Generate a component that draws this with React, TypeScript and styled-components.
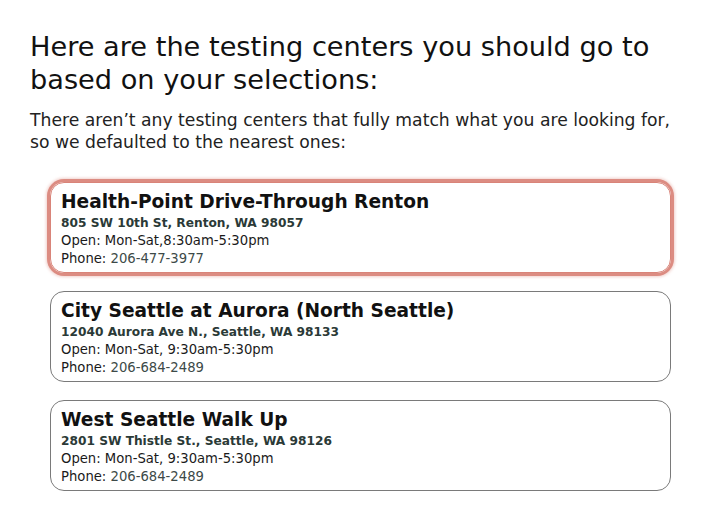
import styled, { createGlobalStyle } from 'styled-components';

const GlobalStyle = createGlobalStyle`
  body {
    margin: 0;
    background: #ffffff;
    font-family: "DejaVu Sans", "Liberation Sans", sans-serif;
    color: #111111;
  }
`;

const Page = styled.div`
  padding: 30px 30px 20px 30px;
  display: flex;
  flex-direction: column;
`;

const Heading = styled.h1`
  margin: 0;
  font-size: 27.2px;
  font-weight: 400;
  line-height: 33px;
  color: #111;
`;

const Intro = styled.p`
  margin: 13px 0 0 0;
  font-size: 17.2px;
  line-height: 22px;
  color: #222;
`;

const CardList = styled.div`
  display: flex;
  flex-direction: column;
  gap: 18px;
  margin: 29px 20px 0 20px;
`;

const Card = styled.div<{ $active?: boolean }>`
  border: 1px solid ${(p) => (p.$active ? '#d98479' : '#7a7a7a')};
  border-radius: 14px;
  padding: 7px 10px 4px 10px;
  height: 91px;
  box-sizing: border-box;
  box-shadow: ${(p) =>
    p.$active ? '0 0 0 3px #dc8c82, 0 0 3px 4px rgba(220, 140, 130, 0.4)' : 'none'};
`;

const Title = styled.div`
  font-size: 18.6px;
  font-weight: 700;
  line-height: 24px;
  color: #111;
`;

const Address = styled.div`
  font-size: 12.2px;
  font-weight: 700;
  line-height: 18px;
  color: #2b3a37;
`;

const Line = styled.div`
  font-size: 13.2px;
  line-height: 18px;
  color: #1a1a1a;
`;

const PhoneNumber = styled.span`
  color: #3d4a48;
`;

const centers = [
  {
    name: 'Health-Point Drive-Through Renton',
    address: '805 SW 10th St, Renton, WA 98057',
    hours: 'Open: Mon-Sat,8:30am-5:30pm',
    phone: '206-477-3977',
    active: true,
  },
  {
    name: 'City Seattle at Aurora (North Seattle)',
    address: '12040 Aurora Ave N., Seattle, WA 98133',
    hours: 'Open: Mon-Sat, 9:30am-5:30pm',
    phone: '206-684-2489',
    active: false,
  },
  {
    name: 'West Seattle Walk Up',
    address: '2801 SW Thistle St., Seattle, WA 98126',
    hours: 'Open: Mon-Sat, 9:30am-5:30pm',
    phone: '206-684-2489',
    active: false,
  },
];

function App() {
  return (
    <Page>
      <GlobalStyle />
      <Heading>
        Here are the testing centers you should go to
        <br />
        based on your selections:
      </Heading>
      <Intro>
        There aren’t any testing centers that fully match what you are looking for,
        <br />
        so we defaulted to the nearest ones:
      </Intro>
      <CardList>
        {centers.map((c) => (
          <Card key={c.name} $active={c.active}>
            <Title>{c.name}</Title>
            <Address>{c.address}</Address>
            <Line>{c.hours}</Line>
            <Line>
              Phone: <PhoneNumber>{c.phone}</PhoneNumber>
            </Line>
          </Card>
        ))}
      </CardList>
    </Page>
  );
}

export default App;
